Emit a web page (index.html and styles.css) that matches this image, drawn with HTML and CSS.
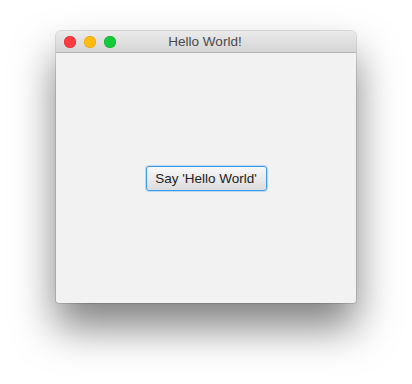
FILE: index.html
```html
<!DOCTYPE html>
<html lang="en">
<head>
  <meta charset="UTF-8" />
  <meta name="viewport" content="width=device-width, initial-scale=1.0" />
  <title>Hello World!</title>
  <link rel="stylesheet" href="styles.css">
</head>
<body>
  <div class="window">
    <div class="titlebar">
      <div class="lights">
        <span class="light close"></span>
        <span class="light minimize"></span>
        <span class="light zoom"></span>
      </div>
      <div class="title">Hello World!</div>
    </div>
    <div class="content">
      <button class="btn">Say 'Hello World'</button>
    </div>
  </div>
</body>
</html>
```

FILE: styles.css
```css
*, *::before, *::after { box-sizing: border-box; }

/* Page */
html, body { height: 100%; }
body { margin: 0; padding: 31px 0 0 56px; background: #fff; font-family: 'Liberation Sans', Arial, sans-serif; }

/* Window frame */
.window { width: 300px; border-radius: 5px 5px 3px 3px; overflow: hidden; background: #f2f2f2; box-shadow: 0 0 0 1px rgba(0,0,0,0.12), 0 24px 42px rgba(0,0,0,0.5); }

/* Title bar */
.titlebar { position: relative; height: 22px; display: flex; align-items: center; padding-left: 8px; background: linear-gradient(180deg, #ebebeb, #d5d5d5); border-bottom: 1px solid #b5b5b5; }
.lights { display: flex; gap: 8px; }
.light { width: 12px; height: 12px; border-radius: 50%; }
.light.close { background: #fc3d3f; box-shadow: inset 0 0 0 0.5px #e0282b; }
.light.minimize { background: #fdbc0f; box-shadow: inset 0 0 0 0.5px #dea10a; }
.light.zoom { background: #14c93b; box-shadow: inset 0 0 0 0.5px #0ead2c; }
.title { position: absolute; left: 0; right: 0; top: 3px; padding-right: 2px; text-align: center; font-size: 13.5px; color: #4a4a4a; }

/* Scene */
.content { height: 250px; display: flex; align-items: center; justify-content: center; }
.btn { width: 121px; height: 25px; padding: 0; font-family: inherit; font-size: 13.5px; color: #222; border: 1px solid #3a9cec; border-radius: 3px; background: linear-gradient(180deg, #f8f8f8, #dcdcdc); box-shadow: 0 0 0 1px rgba(90,170,240,0.35); }
```
